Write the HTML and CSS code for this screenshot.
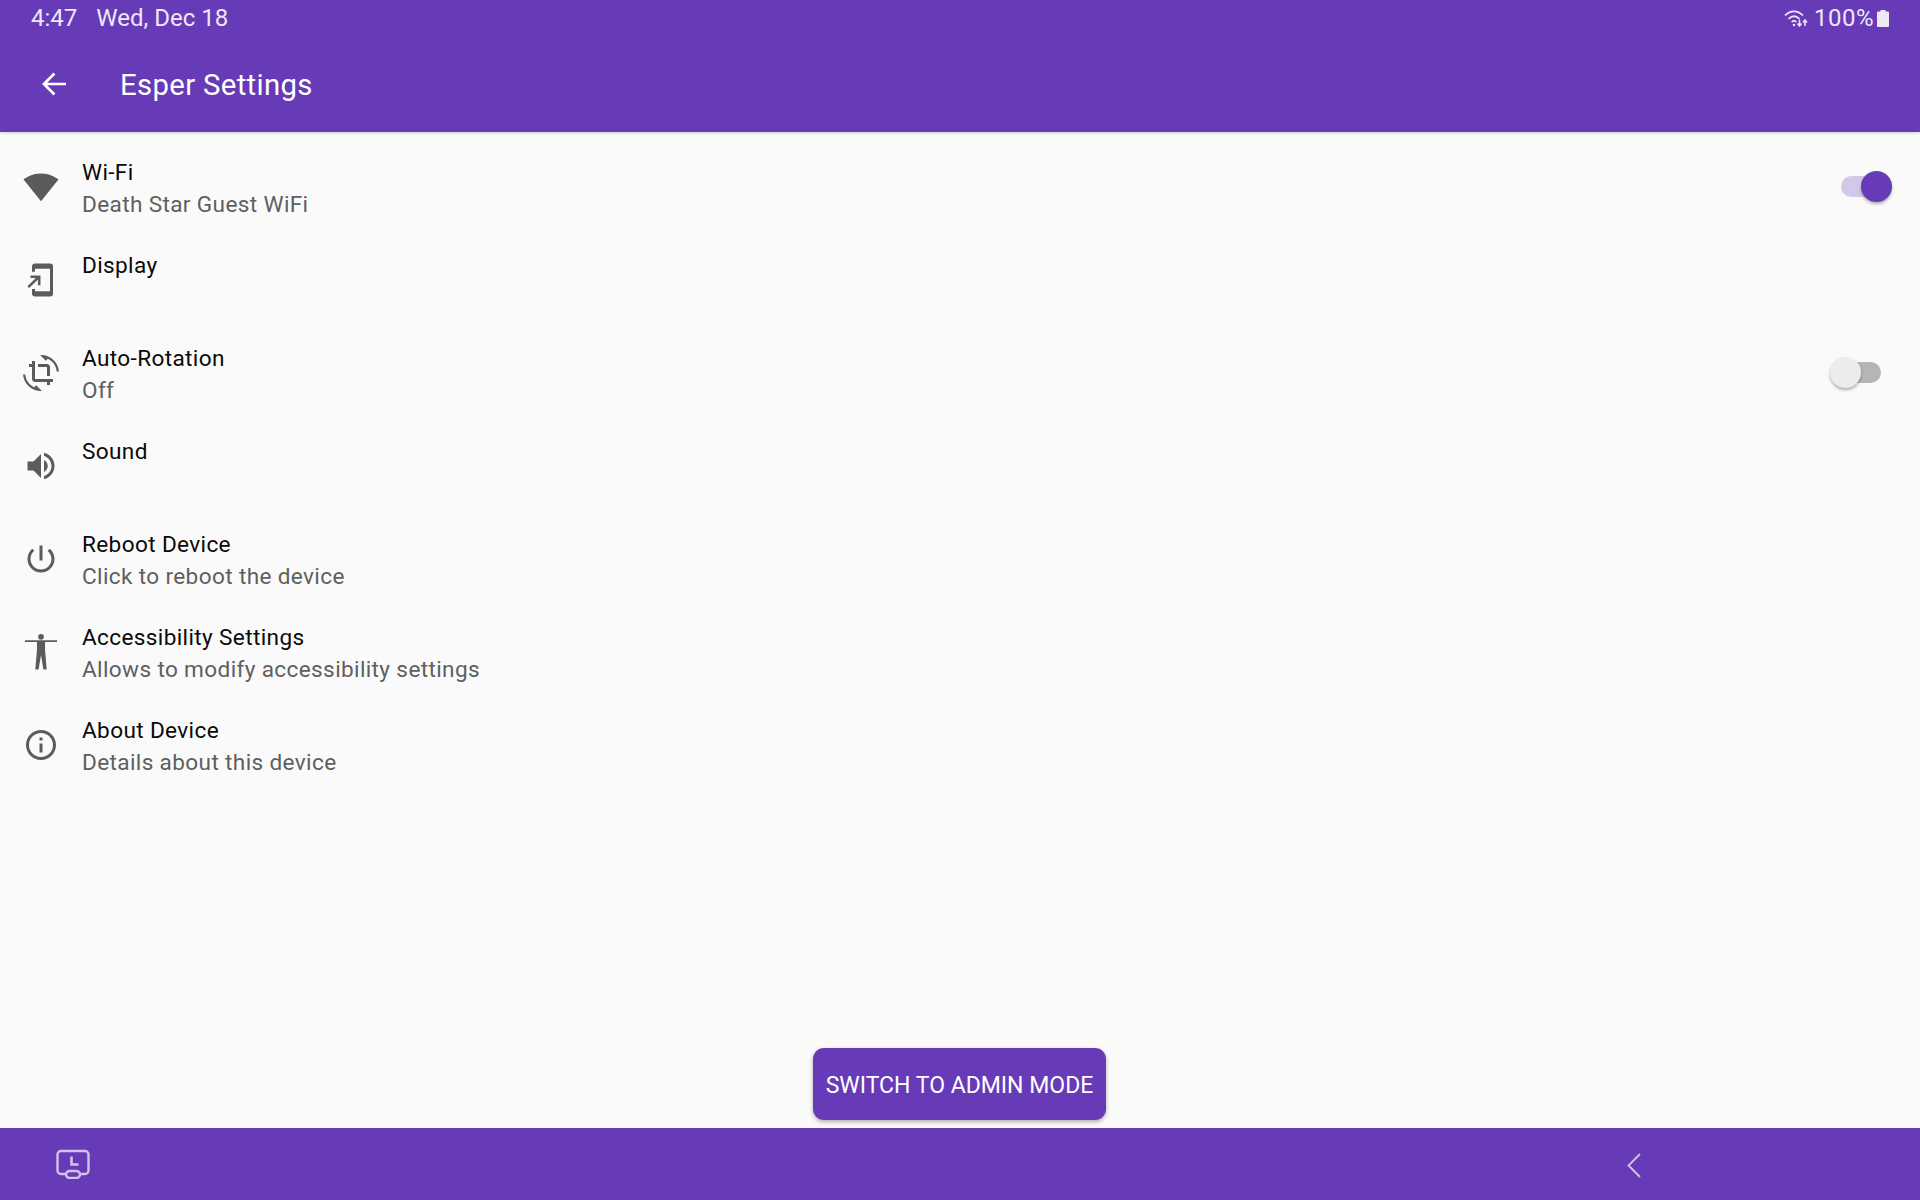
FILE: index.html
```html
<!DOCTYPE html>
<html lang="en">
<head>
    <meta charset="UTF-8">
    <title>Esper Settings</title>
    <link rel="stylesheet" href="styles.css">
</head>
<body>
    <div class="app">
        <!-- Status bar and toolbar -->
        <header class="top">
            <div class="status-bar">
                <div class="status-left">
                    <span>4:47</span>
                    <span>Wed, Dec 18</span>
                </div>
                <div class="status-right">
                    <svg class="status-wifi" viewBox="0 0 24 18">
                        <path d="M1 6.500C6.500 1 13.500 1 19 6.500M4.500 10C8 6.500 12 6.500 15.500 10M7.700 13C9.200 11.500 10.800 11.500 12.300 13" fill="none" stroke="currentColor" stroke-width="1.700"/>
                        <circle cx="10" cy="16" r="1.300" fill="currentColor"/>
                        <path d="M15.500 10.500v6M13.500 14.500l2 2.500 2-2.500M21 17v-6M19 13.500l2-2.500 2 2.500" fill="none" stroke="currentColor" stroke-width="1.500"/>
                    </svg>
                    <span class="battery-text">100%</span>
                    <svg class="battery" viewBox="0 0 12 17"><path d="M3.500 0h5v1.500H11a1 1 0 0 1 1 1V16a1 1 0 0 1-1 1H1a1 1 0 0 1-1-1V2.500a1 1 0 0 1 1-1h2.500z" fill="currentColor"/></svg>
                </div>
            </div>
            <div class="toolbar">
                <svg class="icon back" viewBox="0 0 24 24"><path d="M20 12H5.500M12.300 5L5.300 12l7 7"/></svg>
                <h1>Esper Settings</h1>
            </div>
        </header>

        <!-- Settings list -->
        <main class="list">
            <div class="row">
                <svg class="icon" viewBox="0 0 24 24"><path d="M12.010 21.490L23.640 7c-.45-.34-4.930-4-11.640-4C5.280 3 .81 6.660.36 7l11.630 14.490.01.01.01-.01z"/></svg>
                <div class="row-text">
                    <div class="row-title">Wi-Fi</div>
                    <div class="row-sub">Death Star Guest WiFi</div>
                </div>
                <div class="switch on"><span class="knob"></span></div>
            </div>
            <div class="row">
                <svg class="icon" viewBox="0 0 24 24">
                    <path d="M18 1H8a2 2 0 0 0-2 2v3.500h2V4.500h10v15H8V18H6v3a2 2 0 0 0 2 2h10a2 2 0 0 0 2-2V3a2 2 0 0 0-2-2z"/>
                    <path d="M5 9.800h5.800v5.700M10.500 10l-7 6.800" fill="none" stroke="#5b5b5b" stroke-width="1.700"/>
                </svg>
                <div class="row-text">
                    <div class="row-title">Display</div>
                </div>
            </div>
            <div class="row">
                <svg class="icon" viewBox="0 0 24 24"><path d="M7.470 21.490C4.200 19.930 1.860 16.760 1.500 13H0c.51 6.160 5.660 11 11.950 11 .23 0 .44-.02.66-.03L8.800 20.150l-1.330 1.340zM12.050 0c-.23 0-.44.02-.66.04l3.810 3.810 1.330-1.330C19.800 4.070 22.140 7.240 22.500 11H24c-.51-6.160-5.660-11-11.950-11zM16 14h2V8c0-1.110-.9-2-2-2h-6v2h6v6zm-8 2V4H6v2H4v2h2v8c0 1.100.89 2 2 2h8v2h2v-2h2v-2H8z"/></svg>
                <div class="row-text">
                    <div class="row-title">Auto-Rotation</div>
                    <div class="row-sub">Off</div>
                </div>
                <div class="switch off"><span class="knob"></span></div>
            </div>
            <div class="row">
                <svg class="icon" viewBox="0 0 24 24"><path d="M3 9v6h4l5 5V4L7 9H3zm13.500 3c0-1.770-1.020-3.290-2.500-4.030v8.050c1.480-.73 2.500-2.250 2.500-4.020zM14 3.230v2.060c2.890.86 5 3.540 5 6.710s-2.110 5.850-5 6.710v2.060c4.010-.91 7-4.490 7-8.770 0-4.280-2.990-7.860-7-8.770z"/></svg>
                <div class="row-text">
                    <div class="row-title">Sound</div>
                </div>
            </div>
            <div class="row">
                <svg class="icon" viewBox="0 0 24 24"><path d="M13 3h-2v10h2V3zm4.830 2.170l-1.420 1.420C17.990 7.860 19 9.810 19 12c0 3.870-3.130 7-7 7s-7-3.130-7-7c0-2.190 1.010-4.140 2.580-5.420L6.170 5.170C4.230 6.820 3 9.260 3 12c0 4.970 4.030 9 9 9s9-4.030 9-9c0-2.740-1.230-5.180-3.170-6.830z"/></svg>
                <div class="row-text">
                    <div class="row-title">Reboot Device</div>
                    <div class="row-sub">Click to reboot the device</div>
                </div>
            </div>
            <div class="row">
                <svg class="icon" viewBox="0 0 24 24">
                    <circle cx="12" cy="1.900" r="1.900"/>
                    <path d="M1.300 4.100h21.400v1.200H14.700v5.400l1.100 13h-2.200L12 14l-1.600 9.700H8.200l1.100-13V5.300H1.300z"/>
                </svg>
                <div class="row-text">
                    <div class="row-title">Accessibility Settings</div>
                    <div class="row-sub">Allows to modify accessibility settings</div>
                </div>
            </div>
            <div class="row">
                <svg class="icon" viewBox="0 0 24 24"><path d="M11 7h2v2h-2zm0 4h2v6h-2zm1-9C6.480 2 2 6.480 2 12s4.480 10 10 10 10-4.480 10-10S17.520 2 12 2zm0 18c-4.410 0-8-3.590-8-8s3.590-8 8-8 8 3.590 8 8-3.590 8-8 8z"/></svg>
                <div class="row-text">
                    <div class="row-title">About Device</div>
                    <div class="row-sub">Details about this device</div>
                </div>
            </div>
        </main>

        <div class="actions">
            <button class="admin-btn">SWITCH TO ADMIN MODE</button>
        </div>

        <!-- Bottom navigation -->
        <footer class="nav">
            <svg class="nav-clock" viewBox="0 0 34 30">
                <path d="M10 25H5a3.500 3.500 0 0 1-3.500-3.500v-16A3.500 3.500 0 0 1 5 2h24a3.500 3.500 0 0 1 3.500 3.500v16A3.500 3.500 0 0 1 29 25h-5" fill="none" stroke="currentColor" stroke-width="2.400"/>
                <rect x="10" y="22" width="14" height="7" rx="3.500" fill="none" stroke="currentColor" stroke-width="2.400"/>
                <path d="M15.500 7.500v8h7" fill="none" stroke="currentColor" stroke-width="2.600"/>
            </svg>
            <svg class="nav-back" viewBox="0 0 14 25"><path d="M13 1L1.500 12.500 13 24" fill="none" stroke="currentColor" stroke-width="1.800"/></svg>
        </footer>
    </div>
</body>
</html>
```

FILE: styles.css
```css
*, *::before, *::after {
    box-sizing: border-box;
}

body {
    margin: 0;
    font-family: 'Roboto', sans-serif;
    background: #fafafa;
}

.app {
    height: 1200px;
    display: flex;
    flex-direction: column;
    overflow: hidden;
}

/* Top bars */
.top {
    background: #673ab7;
    box-shadow: 0 1px 3px rgba(0, 0, 0, 0.2);
}

.status-bar {
    height: 36px;
    display: flex;
    justify-content: space-between;
    align-items: center;
    padding: 0 31px;
    color: #ede7f6;
    font-size: 24px;
}

.status-left {
    display: flex;
    gap: 19px;
}

.status-right {
    display: flex;
    align-items: center;
}

.status-wifi {
    width: 24px;
    height: 18px;
    margin-right: 6px;
}

.battery-text {
    letter-spacing: 0.5px;
}

.battery {
    width: 12px;
    height: 17px;
    margin-left: 3px;
}

.toolbar {
    height: 96px;
    display: flex;
    align-items: center;
    padding-left: 36px;
    color: #fff;
}

.toolbar h1 {
    margin: 2px 0 0 48px;
    font-size: 29.3px;
    font-weight: 400;
    letter-spacing: 0.35px;
}

.icon {
    width: 36px;
    height: 36px;
    flex-shrink: 0;
    fill: #5b5b5b;
}

.icon.back {
    fill: none;
    stroke: #fff;
    stroke-width: 1.8;
}

/* Settings rows */
.list {
    flex: 1;
    padding-top: 8px;
}

.row {
    height: 93px;
    display: flex;
    align-items: center;
    padding-left: 23px;
}

.row-text {
    flex: 1;
    height: 64px;
    margin: 5px 0 0 23px;
    letter-spacing: 0.36px;
}

.row-title {
    font-size: 22.6px;
    line-height: 32px;
    color: #0a0a0a;
}

.row-sub {
    font-size: 22.6px;
    line-height: 32px;
    color: #5f5f5f;
}

.switch {
    position: relative;
    width: 48px;
    height: 21px;
    border-radius: 11px;
}

.switch.on {
    background: #d3c8e8;
    margin-right: 31px;
}

.switch.off {
    background: #b5b5b5;
    margin-right: 39px;
}

.knob {
    position: absolute;
    top: -5px;
    width: 31px;
    height: 31px;
    border-radius: 50%;
    box-shadow: 0 2px 3px rgba(0, 0, 0, 0.3);
}

.switch.on .knob {
    right: -3px;
    background: #673ab7;
}

.switch.off .knob {
    left: -3px;
    background: #ececec;
}

/* Button above nav */
.actions {
    display: flex;
    justify-content: center;
    padding-bottom: 8px;
}

.admin-btn {
    width: 293px;
    height: 72px;
    margin-right: 1px;
    padding: 2px 0 0;
    border: none;
    border-radius: 11px;
    background: #673ab7;
    color: #fff;
    font-family: inherit;
    font-size: 23px;
    box-shadow: 0 2px 4px rgba(0, 0, 0, 0.3);
}

/* Bottom navigation */
.nav {
    height: 72px;
    flex-shrink: 0;
    display: flex;
    justify-content: space-between;
    align-items: center;
    padding: 0 279px 0 56px;
    background: #673ab7;
    color: #d1c4e9;
}

.nav-clock {
    width: 34px;
    height: 30px;
}

.nav-back {
    width: 14px;
    height: 25px;
    margin-top: 2px;
}
```
